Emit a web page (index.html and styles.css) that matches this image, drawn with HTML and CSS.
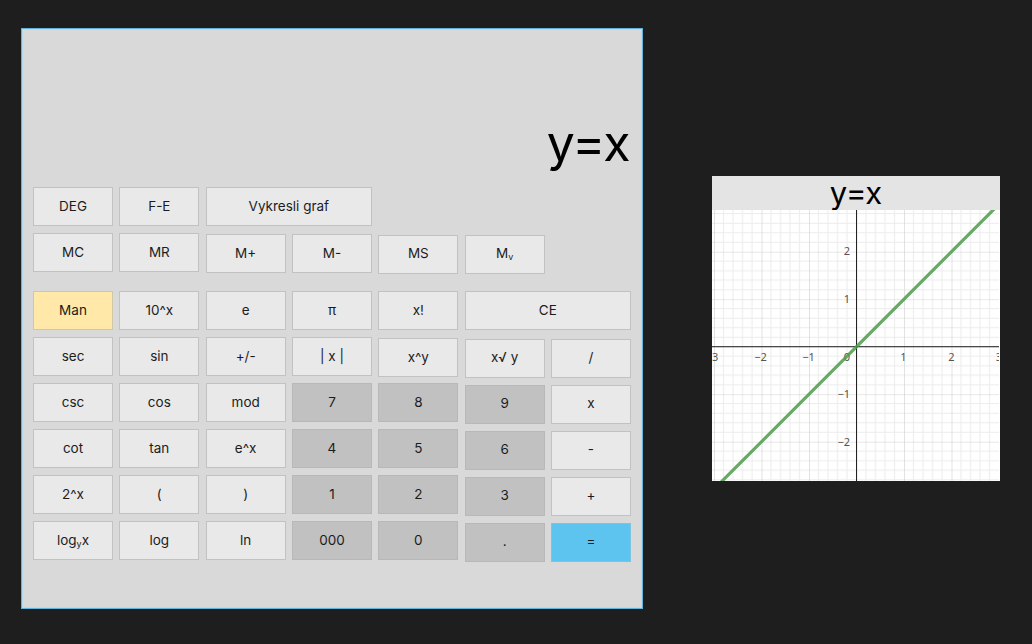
FILE: index.html
```html
<!DOCTYPE html>
<html lang="cs">
<head>
<meta charset="utf-8">
<title>Kalkulačka</title>
<link rel="stylesheet" href="styles.css">
</head>
<body>
<main class="calc">
  <div class="display">y=x</div>
  <div class="top-grid">
    <button class="btn">DEG</button>
    <button class="btn">F-E</button>
    <button class="btn span2">Vykresli graf</button>
    <span class="blank"></span>
    <span class="blank"></span>
    <span class="blank"></span>
    <button class="btn">MC</button>
    <button class="btn">MR</button>
    <button class="btn lo">M+</button>
    <button class="btn lo">M-</button>
    <button class="btn lo2">MS</button>
    <button class="btn lo2">M<span class="sub">v</span></button>
  </div>
  <div class="main-grid">
    <button class="btn man">Man</button>
    <button class="btn">10^x</button>
    <button class="btn">e</button>
    <button class="btn">π</button>
    <button class="btn">x!</button>
    <button class="btn span2">CE</button>

    <button class="btn">sec</button>
    <button class="btn">sin</button>
    <button class="btn">+/-</button>
    <button class="btn">| x |</button>
    <button class="btn lo">x^y</button>
    <button class="btn lo2">x√ y</button>
    <button class="btn lo2">/</button>

    <button class="btn">csc</button>
    <button class="btn">cos</button>
    <button class="btn">mod</button>
    <button class="btn num">7</button>
    <button class="btn num">8</button>
    <button class="btn num lo2">9</button>
    <button class="btn lo2">x</button>

    <button class="btn">cot</button>
    <button class="btn">tan</button>
    <button class="btn">e^x</button>
    <button class="btn num">4</button>
    <button class="btn num">5</button>
    <button class="btn num lo2">6</button>
    <button class="btn lo2">-</button>

    <button class="btn">2^x</button>
    <button class="btn">(</button>
    <button class="btn">)</button>
    <button class="btn num">1</button>
    <button class="btn num">2</button>
    <button class="btn num lo2">3</button>
    <button class="btn lo2">+</button>

    <button class="btn">log<span class="sub">y</span>x</button>
    <button class="btn">log</button>
    <button class="btn">ln</button>
    <button class="btn num">000</button>
    <button class="btn num">0</button>
    <button class="btn num lo2">.</button>
    <button class="btn eq lo2">=</button>
  </div>
</main>

<section class="graph">
  <div class="graph-title">y=x</div>
  <svg class="plot" width="287" height="271" viewBox="0 0 287 271">
    <defs>
      <pattern id="grid" x="144.5" y="136.7" width="47.5" height="47.5" patternUnits="userSpaceOnUse">
        <path d="M9.5 0V47.5M19 0V47.5M28.5 0V47.5M38 0V47.5M0 9.5H47.5M0 19H47.5M0 28.5H47.5M0 38H47.5" stroke="#ececec" stroke-width="1" fill="none"/>
        <path d="M0 0V47.5M0 0H47.5" stroke="#cfcfcf" stroke-width="1.2" fill="none"/>
      </pattern>
    </defs>
    <rect width="287" height="271" fill="#fff"/>
    <rect width="287" height="271" fill="url(#grid)"/>
    <line x1="144.5" y1="0" x2="144.5" y2="271" stroke="#222" stroke-width="1"/>
    <line x1="0" y1="136.7" x2="287" y2="136.7" stroke="#222" stroke-width="1"/>
    <g class="lbl" text-anchor="middle">
      <text x="0" y="151">−3</text>
      <text x="48.5" y="151">−2</text>
      <text x="96.5" y="151">−1</text>
      <text x="191.5" y="151">1</text>
      <text x="239.5" y="151">2</text>
      <text x="287" y="151">3</text>
    </g>
    <g class="lbl" text-anchor="end">
      <text x="138" y="151">0</text>
      <text x="138" y="45">2</text>
      <text x="138" y="92.5">1</text>
      <text x="138" y="188">−1</text>
      <text x="138" y="235.5">−2</text>
    </g>
    <line x1="-7.5" y1="288.7" x2="296.5" y2="-15.3" stroke="#4e9a4e" stroke-width="3.2" stroke-opacity="0.85"/>
  </svg>
</section>
</body>
</html>
```

FILE: styles.css
```css
html, body {
  margin: 0;
  padding: 0;
}
body {
  background: #1e1e1e;
  width: 1032px;
  height: 644px;
  overflow: hidden;
  display: flex;
  align-items: flex-start;
  padding: 28px 0 0 21px;
  box-sizing: border-box;
  font-family: Inter, "Liberation Sans", sans-serif;
}
.calc {
  width: 622px;
  height: 581px;
  box-sizing: border-box;
  background: #d9d9d9;
  border: 1px solid #62b4dc;
  box-shadow: inset 0 0 0 1px #b9dbe9;
  padding: 0 11px 0 11px;
}
.display {
  height: 50px;
  line-height: 50px;
  font-size: 50px;
  padding: 89px 1px 19px 0;
  text-align: right;
  color: #000;
  letter-spacing: -0.5px;
}
.top-grid,
.main-grid {
  display: grid;
  grid-template-columns: repeat(7, 80px);
  column-gap: 6.33px;
  row-gap: 7px;
  grid-auto-rows: 39px;
}
.main-grid {
  margin-top: 19px;
}
.btn {
  height: 39px;
  margin: 0;
  padding: 0;
  box-sizing: border-box;
  background: #e9e9e9;
  border: 1.5px solid #c2c2c2;
  color: #1c1c1c;
  font-family: Inter, "Liberation Sans", sans-serif;
  font-size: 13.5px;
  line-height: 1;
  cursor: pointer;
}
.span2 {
  grid-column: span 2;
}
.blank {
  display: block;
}
.num {
  background: #c1c1c1;
  border-color: #b8b8b8;
}
.man {
  background: #ffe8a8;
  border-color: #cfc7a6;
}
.eq {
  background: #5cc4ef;
  border-color: #7dc4e0;
}
.lo {
  margin-top: 1px;
}
.lo2 {
  margin-top: 1.5px;
}
.sub {
  font-size: 9px;
  vertical-align: -2px;
}
.graph {
  margin: 148px 0 0 69px;
  width: 288px;
  display: flex;
  flex-direction: column;
  background: #fff;
}
.graph-title {
  height: 34px;
  background: #e4e4e4;
  text-align: center;
  font-size: 31px;
  line-height: 34px;
  color: #000;
}
.plot {
  display: block;
}
.lbl {
  font-family: "Noto Sans", "DejaVu Sans", sans-serif;
  font-size: 11px;
  fill: #555;
}
```
